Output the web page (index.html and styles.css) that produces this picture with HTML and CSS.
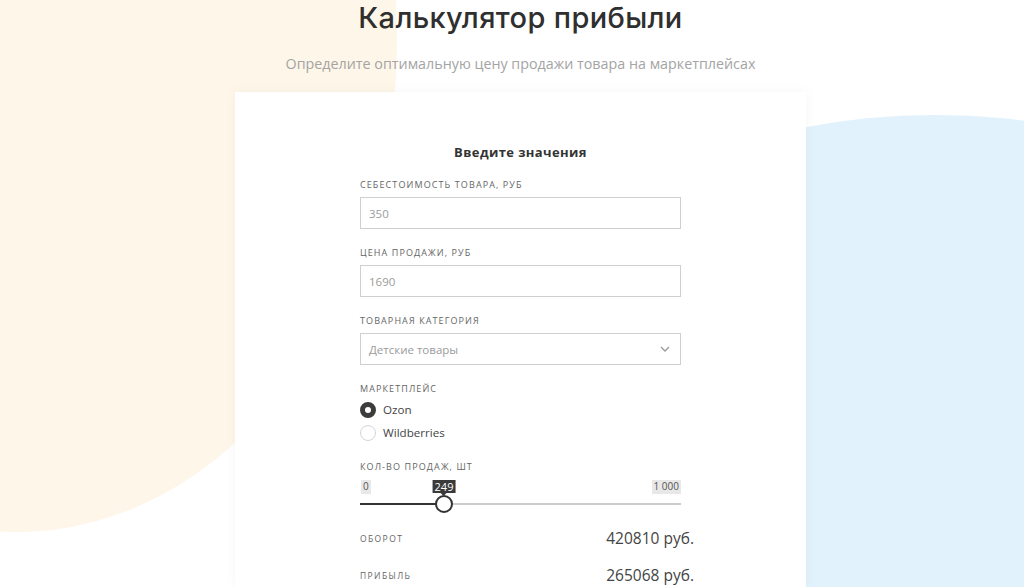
FILE: index.html
```html
<!DOCTYPE html>
<html lang="ru">
<head>
<meta charset="utf-8">
<title>Калькулятор прибыли</title>
<link rel="stylesheet" href="styles.css">
</head>
<body>
<div class="blob blob-cream"></div>
<div class="blob blob-blue"></div>
<main class="page">
  <h1 class="title">Калькулятор прибыли</h1>
  <p class="subtitle">Определите оптимальную цену продажи товара на маркетплейсах</p>
  <section class="card">
    <form class="form">
      <h2 class="form-title">Введите значения</h2>
      <div class="field">
        <label class="label">Себестоимость товара, руб</label>
        <div class="input">350</div>
      </div>
      <div class="field">
        <label class="label">Цена продажи, руб</label>
        <div class="input">1690</div>
      </div>
      <div class="field">
        <label class="label">Товарная категория</label>
        <div class="input select">
          <span>Детские товары</span>
          <svg class="chevron" width="10" height="6" viewBox="0 0 10 6"><path d="M1 1l4 4 4-4" fill="none" stroke="#9a9a9a" stroke-width="1.3"/></svg>
        </div>
      </div>
      <div class="field">
        <label class="label">Маркетплейс</label>
        <div class="radios">
          <div class="radio"><span class="dot checked"></span><span>Ozon</span></div>
          <div class="radio"><span class="dot"></span><span>Wildberries</span></div>
        </div>
      </div>
      <div class="field field-slider">
        <label class="label">Кол-во продаж, шт</label>
        <div class="slider">
          <div class="slider-scale">
            <span class="tag">0</span>
            <span class="tag">1 000</span>
          </div>
          <div class="track-wrap">
            <div class="track"><div class="fill" style="width:84px"></div></div>
            <div class="thumb" style="left:75px"><span class="bubble">249</span></div>
          </div>
        </div>
      </div>
      <div class="result">
        <span class="result-label">Оборот</span>
        <span class="result-value">420810 руб.</span>
      </div>
      <div class="result">
        <span class="result-label">Прибыль</span>
        <span class="result-value">265068 руб.</span>
      </div>
    </form>
  </section>
</main>
</body>
</html>
```
FILE: styles.css
```css
* { box-sizing: border-box; }
html, body { margin: 0; padding: 0; }
body {
  width: 1024px;
  height: 587px;
  overflow: hidden;
  position: relative;
  background: #ffffff;
  font-family: "Open Sans", "Liberation Sans", sans-serif;
  color: #333;
}
.blob { position: absolute; z-index: 0; }
.blob-cream {
  left: -363px;
  top: -452px;
  width: 760px;
  height: 984px;
  border-radius: 50%;
  background: #fef6e8;
}
.blob-blue {
  left: 235px;
  top: 115px;
  width: 1400px;
  height: 1400px;
  border-radius: 50%;
  background: #e2f2fd;
}
.page {
  position: relative;
  z-index: 1;
  display: flex;
  flex-direction: column;
  align-items: center;
  padding-left: 17px;
  height: 587px;
  overflow: hidden;
}
.title {
  margin: 0;
  font-family: Inter, "Open Sans", sans-serif;
  font-weight: 500;
  font-size: 29px;
  line-height: 36px;
  color: #2f2f2f;
  letter-spacing: 0.35px;
}
.subtitle {
  margin: 18px 0 0;
  font-size: 14.3px;
  line-height: 20px;
  color: #a4a4a4;
}
.card {
  margin-top: 18px;
  width: 571px;
  flex: 0 0 auto;
  height: 495px;
  background: #fff;
  box-shadow: 0 0 12px rgba(0, 0, 0, 0.04);
  display: flex;
  justify-content: center;
  padding-top: 51px;
}
.form {
  width: 321px;
  display: flex;
  flex-direction: column;
}
.form-title {
  margin: 0 0 17px;
  text-align: center;
  font-size: 13px;
  line-height: 18px;
  font-weight: 700;
  color: #333;
  letter-spacing: 0.4px;
}
.field {
  display: flex;
  flex-direction: column;
  margin-bottom: 17px;
}
.label {
  font-size: 9px;
  line-height: 14px;
  letter-spacing: 1.1px;
  text-transform: uppercase;
  color: #666;
  margin-bottom: 5px;
}
.input {
  height: 32px;
  border: 1px solid #cfcfcf;
  padding: 0 8px;
  display: flex;
  align-items: center;
  font-size: 11.5px;
  color: #9b9b9b;
}
.select { justify-content: space-between; padding-right: 8px; }
.chevron { display: block; margin-right: 2px; }
.radios { display: flex; flex-direction: column; gap: 7px; margin-top: 1px; }
.radio {
  display: flex;
  align-items: center;
  gap: 7px;
  font-size: 11.6px;
  line-height: 16px;
  color: #444;
}
.dot {
  width: 16px;
  height: 16px;
  border-radius: 50%;
  border: 1px solid #d4d4d4;
  background: #fff;
}
.dot.checked { border: 5px solid #3c3c3c; }
.field-slider { margin-top: 2px; margin-bottom: 15px; }
.field-slider .label { margin-bottom: 6px; }
.slider { display: flex; flex-direction: column; }
.slider-scale {
  display: flex;
  justify-content: space-between;
  height: 14px;
}
.tag {
  font-size: 10px;
  line-height: 13px;
  padding: 0 2px;
  background: #e8e8e8;
  color: #555;
}
.tag:first-child { margin-left: 1px; }
.track-wrap {
  position: relative;
  height: 18px;
  margin-top: 1px;
  display: flex;
  align-items: center;
}
.track {
  width: 100%;
  height: 2px;
  background: #cccccc;
  position: relative;
}
.fill { height: 2px; background: #333; }
.thumb {
  position: absolute;
  top: 0;
  width: 18px;
  height: 18px;
  border-radius: 50%;
  border: 2px solid #333;
  background: #fff;
}
.bubble {
  position: absolute;
  left: 50%;
  bottom: 18px;
  transform: translateX(-50%);
  background: #3a3a3a;
  color: #fff;
  font-size: 11px;
  line-height: 13px;
  padding: 0 2px;
}
.bubble::after {
  content: "";
  position: absolute;
  left: 50%;
  top: 13px;
  margin-left: -3px;
  border: 3px solid transparent;
  border-top-color: #3a3a3a;
}
.result {
  display: flex;
  justify-content: space-between;
  align-items: center;
  margin-right: -13px;
  height: 20px;
  margin-bottom: 17px;
}
.result-label {
  font-size: 8.5px;
  letter-spacing: 1.4px;
  text-transform: uppercase;
  color: #666;
}
.result-value {
  font-size: 15.5px;
  color: #444;
}
```
